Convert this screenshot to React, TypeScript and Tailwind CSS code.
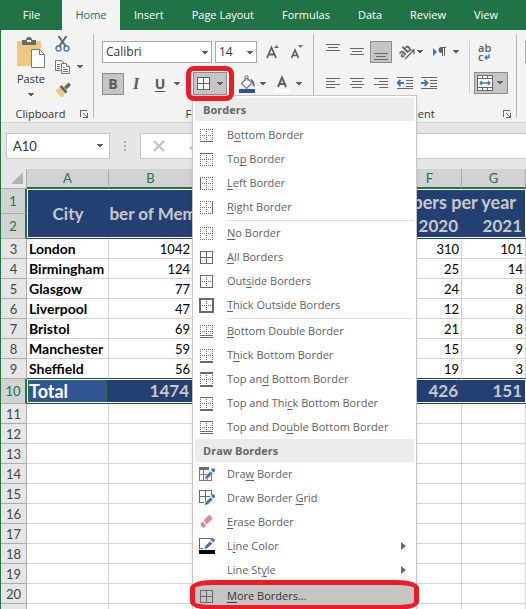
import React, { useState } from 'react';

type Edge = 'none' | 'dot' | 'solid' | 'thick' | 'double';

interface BorderIconProps {
    top?: Edge;
    bottom?: Edge;
    left?: Edge;
    right?: Edge;
    inner?: Edge;
}

interface MenuEntry {
    before: string;
    key: string;
    after: string;
    icon?: React.ReactNode;
    submenu?: boolean;
}

const Caret: React.FC<{ className?: string }> = ({ className = '' }) => (
    <svg className={`w-[10px] h-[4px] shrink-0 ${className}`} viewBox="0 0 10 4" shapeRendering="crispEdges">
        <path d="M2 0h6v1H7v1H6v1H4V2H3V1H2z" fill="#5f5f5f" />
    </svg>
);

const BorderIcon: React.FC<BorderIconProps> = ({ top = 'dot', bottom = 'dot', left = 'dot', right = 'dot', inner = 'dot' }) => {
    const width = (edge: Edge) => (edge === 'thick' ? 2 : 1);
    const dash = (edge: Edge) => (edge === 'dot' ? '1 1' : undefined);
    return (
        <svg width="15" height="15" viewBox="-1 -1 15 15" fill="none" stroke="#6a6a6a" shapeRendering="crispEdges">
            <path d="M0 6.5H13M6.5 0V13" strokeDasharray={dash(inner)} />
            <path d={top === 'thick' ? 'M0 0H13' : 'M0 .5H13'} strokeWidth={width(top)} strokeDasharray={dash(top)} />
            <path d={left === 'thick' ? 'M0 -1V14' : 'M.5 0V13'} strokeWidth={width(left)} strokeDasharray={dash(left)} />
            <path d={right === 'thick' ? 'M13 -1V14' : 'M12.5 0V13'} strokeWidth={width(right)} strokeDasharray={dash(right)} />
            <path d={bottom === 'thick' ? 'M0 13H13' : 'M0 12.5H13'} strokeWidth={width(bottom)} strokeDasharray={dash(bottom)} />
            {bottom === 'double' && <path d="M0 10.5H13" />}
        </svg>
    );
};

const Pencil = () => (
    <>
        <path d="M5.5 13.5l1-3.5 5-5 2.5 2.5-5 5z" fill="#3e76b5" stroke="#fff" strokeWidth=".6" />
        <path d="M12 4l1.5-1.5a1 1 0 0 1 1.5 0l1 1a1 1 0 0 1 0 1.500L14.500 6.500z" fill="#3e76b5" />
    </>
);

const DrawBorderIcon = () => (
    <svg width="16" height="16" viewBox="0 0 16 16">
        <path d="M0 1h10v3H0z" fill="#6a6a6a" />
        <path d="M.5 3v11.500h12V9M4.500 4v10M0 8.500h8M8.500 10v4" fill="none" stroke="#777" shapeRendering="crispEdges" />
        <Pencil />
    </svg>
);

const DrawGridIcon = () => (
    <svg width="16" height="16" viewBox="0 0 16 16">
        <path d="M5 12.500H.5V.5h12V5M6.500 1v11M1 6.500h10" fill="none" stroke="#6a6a6a" shapeRendering="crispEdges" />
        <g transform="translate(0 2)"><Pencil /></g>
    </svg>
);

const EraserIcon = () => (
    <svg width="16" height="16" viewBox="0 0 16 16">
        <path d="M4.500 6.500l5-5q1-.8 2 0l1.500 2.500q.4 1-.4 1.800l-4.800 4.400z" fill="#e48597" />
        <path d="M3.700 7.500l3.600 4-2.200 2-1.500.2-2-2.700.2-1.700z" fill="#e48597" />
    </svg>
);

const LineColorIcon = () => (
    <svg width="16" height="16" viewBox="0 0 16 16">
        <path d="M4 10.500H.5v-10h12" fill="none" stroke="#6a6a6a" shapeRendering="crispEdges" />
        <g transform="translate(-.5 -2)"><Pencil /></g>
        <path d="M0 12h16v4H0z" fill="#000" />
    </svg>
);

const HORIZONTAL: { [name: string]: string } = {
    top: 'M1 .5h14M3 3.500h10M1 6.500h14',
    middle: 'M1 4.500h14M3 7.500h10M1 10.500h14',
    bottom: 'M1 9.500h14M3 12.500h10M1 15.500h14',
    left: 'M1 3.500h14M1 6.500h9M1 9.500h14M1 12.500h9',
    center: 'M1 3.500h14M3 6.500h10M1 9.500h14M3 12.500h10',
    right: 'M1 3.500h14M6 6.500h9M1 9.500h14M6 12.500h9',
};

const LinesIcon: React.FC<{ kind: string }> = ({ kind }) => (
    <svg width="16" height="16" viewBox="0 0 16 16" fill="none" stroke="#666" shapeRendering="crispEdges">
        <path d={HORIZONTAL[kind]} />
    </svg>
);

const IndentIcon: React.FC<{ increase?: boolean }> = ({ increase }) => (
    <svg width="16" height="14" viewBox="0 0 16 14" fill="none">
        <path d="M0 1.500h16M9 4.500h7M9 7.500h7M9 10.500h7M0 12.500h16" stroke="#666" shapeRendering="crispEdges" />
        <path d={increase ? 'M0 7h6M3.500 4l3 3-3 3' : 'M7 7H1M3.500 4l-3 3 3 3'} stroke="#3e76b5" strokeWidth="1.900" />
    </svg>
);

const Launcher = () => (
    <svg width="8" height="8" viewBox="0 0 8 8" fill="none" stroke="#666" shapeRendering="crispEdges">
        <path d="M.5 7V.5H7M3 3l4 4M7.500 3v4.500H3" />
    </svg>
);

const iconButton = 'w-[22px] h-[22px] shrink-0 flex items-center justify-center';

const RibbonGroup: React.FC<{ label: string; className?: string; children: React.ReactNode }> = ({ label, className = '', children }) => (
    <section className="flex shrink-0">
        <div className={`flex flex-col ${className}`}>
            <div className="h-[76px] pt-1 shrink-0">{children}</div>
            <div className="flex items-center h-4 shrink-0">
                <span className="flex-1 text-center text-[#333]">{label}</span>
                <button aria-label={`${label} settings`} className="w-[13px]"><Launcher /></button>
            </div>
        </div>
        <div className="w-px my-1 bg-[#b4b4b4]" />
    </section>
);

const firstItems: MenuEntry[] = [
    { before: 'B', key: 'o', after: 'ttom Border', icon: <BorderIcon bottom="solid" /> },
    { before: 'To', key: 'p', after: ' Border', icon: <BorderIcon top="solid" /> },
    { before: '', key: 'L', after: 'eft Border', icon: <BorderIcon left="solid" /> },
    { before: '', key: 'R', after: 'ight Border', icon: <BorderIcon right="solid" /> },
];

const boxItems: MenuEntry[] = [
    { before: '', key: 'N', after: 'o Border', icon: <BorderIcon /> },
    { before: '', key: 'A', after: 'll Borders', icon: <BorderIcon top="solid" bottom="solid" left="solid" right="solid" inner="solid" /> },
    { before: 'Out', key: 's', after: 'ide Borders', icon: <BorderIcon top="solid" bottom="solid" left="solid" right="solid" /> },
    { before: '', key: 'T', after: 'hick Outside Borders', icon: <BorderIcon top="thick" bottom="thick" left="thick" right="thick" /> },
];

const bottomItems: MenuEntry[] = [
    { before: '', key: 'B', after: 'ottom Double Border', icon: <BorderIcon bottom="double" /> },
    { before: 'T', key: 'h', after: 'ick Bottom Border', icon: <BorderIcon bottom="thick" /> },
    { before: 'Top an', key: 'd', after: ' Bottom Border', icon: <BorderIcon top="thick" bottom="thick" /> },
    { before: 'Top and Thi', key: 'c', after: 'k Bottom Border', icon: <BorderIcon top="solid" bottom="thick" /> },
    { before: 'Top and Do', key: 'u', after: 'ble Bottom Border', icon: <BorderIcon top="solid" bottom="double" /> },
];

const drawItems: MenuEntry[] = [
    { before: 'Dra', key: 'w', after: ' Border', icon: <DrawBorderIcon /> },
    { before: 'Draw Border ', key: 'G', after: 'rid', icon: <DrawGridIcon /> },
    { before: '', key: 'E', after: 'rase Border', icon: <EraserIcon /> },
    { before: 'L', key: 'i', after: 'ne Color', icon: <LineColorIcon />, submenu: true },
    { before: 'Line St', key: 'y', after: 'le', submenu: true },
];

const MenuItem: React.FC<{ item: MenuEntry; active?: boolean }> = ({ item, active }) => (
    <button
        role="menuitem"
        className={`flex items-center w-full h-6 text-left ${active ? 'bg-[#c5c5c5] text-[#333]' : 'text-[#5f5f5f] hover:bg-[#e1e1e1]'}`}
    >
        <span className="w-8 pl-1 shrink-0">{item.icon}</span>
        <span className="flex-1 whitespace-nowrap">
            {item.before}
            <span className="underline underline-offset-2">{item.key}</span>
            {item.after}
        </span>
        {item.submenu && (
            <svg className="mr-2" width="5" height="8" viewBox="0 0 5 8"><path d="M0 0l5 4-5 4z" fill="#6a6a6a" /></svg>
        )}
    </button>
);

const MenuHeading: React.FC<{ children: string }> = ({ children }) => (
    <div className="flex items-center h-[23px] pl-2 bg-[#ebebeb] font-bold text-[#666]">{children}</div>
);

const Separator = () => <div className="h-px mt-px ml-8 bg-[#e1e1e1]" />;

const BordersMenu = () => (
    <div role="menu" className="absolute top-full -left-px z-20 w-[225px] p-[2px] bg-white border border-[#c6c6c6] shadow-md">
        <MenuHeading>Borders</MenuHeading>
        <div className="pt-[2px]">{firstItems.map(item => <MenuItem key={item.after} item={item} />)}</div>
        <Separator />
        {boxItems.map(item => <MenuItem key={item.after} item={item} />)}
        <Separator />
        {bottomItems.map(item => <MenuItem key={item.after} item={item} />)}
        <MenuHeading>Draw Borders</MenuHeading>
        {drawItems.map(item => <MenuItem key={item.after} item={item} />)}
        <Separator />
        <div className="relative">
            <MenuItem active item={{ before: '', key: 'M', after: 'ore Borders...', icon: <BorderIcon top="solid" bottom="solid" left="solid" right="solid" inner="solid" /> }} />
            <div className="absolute -inset-x-[5px] -top-1 -bottom-[2px] border-[5px] border-[#ed1c24] rounded-[22px/8px] pointer-events-none" />
        </div>
    </div>
);

const Ribbon = () => {
    const [menuOpen, setMenuOpen] = useState(true);

    return (
        <div className="flex h-[93px] bg-[#f3f3f3] border-b border-[#d2d2d2]">
            <RibbonGroup label="Clipboard" className="w-[92px]">
                <div className="flex pt-[3px] pl-3">
                    <button className="flex flex-col items-center w-9 text-[#333]">
                        <svg width="30" height="32" viewBox="0 0 30 32">
                            <path d="M1 4h24v25H1z" fill="#edc87e" />
                            <path d="M6 3h4q0-3 3-3t3 3h4v5H6z" fill="#6a6a6a" />
                            <path d="M11 3h4v2h-4z" fill="#fff" />
                            <path d="M15.500 12.500h8l5 5v13h-13z" fill="#fff" stroke="#777" />
                            <path d="M23.500 12.500v5h5" fill="none" stroke="#777" />
                        </svg>
                        <span className="text-[11px] leading-5">Paste</span>
                        <Caret className="mt-1" />
                    </button>
                    <div className="flex flex-col gap-[7px] pl-[6px] -mt-px">
                        <button aria-label="Cut">
                            <svg width="16" height="16" viewBox="0 0 16 16" fill="none">
                                <path d="M3.500 0l7 10M11.500 0l-7 10" stroke="#666" strokeWidth="2" />
                                <circle cx="3.500" cy="12.500" r="2.500" stroke="#3e76b5" strokeWidth="1.300" />
                                <circle cx="11.500" cy="12.500" r="2.500" stroke="#3e76b5" strokeWidth="1.300" />
                            </svg>
                        </button>
                        <button aria-label="Copy" className="flex items-center gap-1">
                            <svg width="16" height="16" viewBox="0 0 16 16" fill="#fff" stroke="#777">
                                <path d="M.5 1.500h6l3 3v7h-9z" />
                                <path d="M2 5.500h3M2 7.500h3M2 9.500h3" stroke="#3e76b5" />
                                <path d="M6.500 4.500h5l3 3v7h-8z" />
                                <path d="M11.500 4.500v3h3" />
                                <path d="M8 8.500h2M8 10.500h5M8 12.500h5" stroke="#3e76b5" />
                            </svg>
                            <Caret />
                        </button>
                        <button aria-label="Format Painter">
                            <svg width="16" height="16" viewBox="0 0 16 16">
                                <path d="M0 8l5-2 5 5-2 4H6z" fill="#edc87e" />
                                <path d="M4.500 5l2-2 6 6.500-2 2z" fill="#666" />
                                <path d="M9 5l4.500-4.500L16 3l-4.500 4.500z" fill="#666" />
                            </svg>
                        </button>
                    </div>
                </div>
            </RibbonGroup>

            <RibbonGroup label="Font" className="w-[219px]">
                <div className="flex flex-col gap-[9px] pt-[7px] pl-2">
                    <div className="flex items-center">
                        <div className="relative mr-[3px]">
                            <select aria-label="Font name" className="appearance-none w-[110px] h-[22px] pl-[3px] bg-white border border-[#ababab] text-xs text-[#333]">
                                <option>Calibri</option>
                            </select>
                            <Caret className="absolute right-[2px] top-[10px] pointer-events-none" />
                        </div>
                        <div className="relative mr-1">
                            <select aria-label="Font size" className="appearance-none w-[42px] h-[22px] pl-[3px] bg-white border border-[#ababab] text-xs text-[#333]">
                                <option>14</option>
                            </select>
                            <Caret className="absolute right-[2px] top-[10px] pointer-events-none" />
                        </div>
                        <button aria-label="Increase Font Size" className="w-6 flex justify-center">
                            <svg width="14" height="16" viewBox="0 0 14 16" fill="none">
                                <path d="M1 14L5.500 3.500 10 14M2.500 10.500h6" stroke="#5f5f5f" strokeWidth="1.800" />
                                <path d="M8 4l2.500-3L13 4z" fill="#3e76b5" />
                            </svg>
                        </button>
                        <button aria-label="Decrease Font Size" className="w-6 flex justify-center">
                            <svg width="14" height="16" viewBox="0 0 14 16" fill="none">
                                <path d="M1.500 14L5 6l3.500 8M2.500 11.500h5" stroke="#5f5f5f" strokeWidth="1.700" />
                                <path d="M8 1l2.500 3L13 1z" fill="#3e76b5" />
                            </svg>
                        </button>
                    </div>
                    <div className="flex items-center text-sm text-[#5a5a5a]">
                        <button className={`${iconButton} font-bold bg-[#c5c5c5] border border-[#8c8c8c]`}>B</button>
                        <button className="w-6 font-[Liberation_Serif,serif] italic font-bold text-base leading-5">I</button>
                        <button className="w-6 font-bold underline underline-offset-2">U</button>
                        <Caret className="mr-[11px]" />
                        <div className="relative">
                            <button
                                aria-label="Borders"
                                aria-expanded={menuOpen}
                                onClick={() => setMenuOpen(!menuOpen)}
                                className="flex items-center justify-between w-[34px] h-[23px] pl-[2px] pr-px bg-[#c5c5c5] border border-[#8c8c8c]"
                            >
                                <svg width="15" height="15" viewBox="0 0 15 15" shapeRendering="crispEdges">
                                    <path d="M1.500 1.500h12v12h-12zM7.500 1v13M1 7.500h13" fill="#fff" stroke="#5f5f5f" />
                                </svg>
                                <Caret />
                            </button>
                            <div className="absolute z-30 -inset-x-[7px] -top-[6px] -bottom-[6px] border-[5px] border-[#ed1c24] rounded-lg pointer-events-none" />
                            {menuOpen && <div className="text-[11px]"><BordersMenu /></div>}
                        </div>
                        <button aria-label="Fill Color" className="ml-3">
                            <svg width="16" height="18" viewBox="0 0 16 18">
                                <path d="M2.500 8.500L8 3l5 5-5.500 5.500z" fill="#fff" stroke="#777" strokeWidth="1.200" />
                                <path d="M6 6V2q0-1.500 1.500-1.500T9 2v4" fill="none" stroke="#777" />
                                <path d="M11 4q5 0 4.500 8l-2-1.500V8z" fill="#3e76b5" />
                                <path d="M0 14h16v4H0z" fill="#2f5496" />
                            </svg>
                        </button>
                        <Caret className="ml-[3px] mr-[6px]" />
                        <button aria-label="Font Color">
                            <svg width="16" height="18" viewBox="0 0 16 18" fill="none">
                                <path d="M4 12L8 2.500 12 12M5.500 9h5" stroke="#5f5f5f" strokeWidth="2" />
                                <path d="M0 14h16v4H0z" fill="#fff" />
                            </svg>
                        </button>
                        <Caret className="ml-1" />
                    </div>
                </div>
            </RibbonGroup>

            <RibbonGroup label="Alignment" className="w-[202px]">
                <div className="flex justify-between pt-[7px] pl-2 pr-2">
                    <div className="flex flex-col gap-[9px]">
                        <div className="flex items-center gap-[2px]">
                            <button aria-label="Top Align" className={iconButton}><LinesIcon kind="top" /></button>
                            <button aria-label="Middle Align" className={iconButton}><LinesIcon kind="middle" /></button>
                            <button aria-label="Bottom Align" className={`${iconButton} bg-[#c5c5c5] border border-[#8c8c8c]`}><LinesIcon kind="bottom" /></button>
                            <button aria-label="Orientation" className="flex items-center ml-1">
                                <svg width="17" height="20" viewBox="0 0 17 20" fill="none" overflow="visible">
                                    <text x="0" y="14" transform="rotate(-45 5 10)" fontSize="11" fontWeight="bold" fill="#5f5f5f">ab</text>
                                    <path d="M7 17L15.500 8.500M11.500 8h4.500v4.500" stroke="#5f5f5f" strokeWidth="1.200" />
                                </svg>
                                <Caret />
                            </button>
                            <button aria-label="Text Direction" className="flex items-center gap-1 ml-[6px]">
                                <svg width="14" height="12" viewBox="0 0 14 12">
                                    <path d="M0 2l4 4-4 4z" fill="#3e76b5" />
                                    <path d="M9 1q-3.500 0-3.500 3T9 7z" fill="#5f5f5f" />
                                    <path d="M8 1.500h5M9.500 1v9M11.500 1v9" stroke="#5f5f5f" fill="none" />
                                </svg>
                                <Caret />
                            </button>
                        </div>
                        <div className="flex items-center gap-[2px]">
                            <button aria-label="Align Left" className={iconButton}><LinesIcon kind="left" /></button>
                            <button aria-label="Center" className={iconButton}><LinesIcon kind="center" /></button>
                            <button aria-label="Align Right" className={iconButton}><LinesIcon kind="right" /></button>
                            <button aria-label="Decrease Indent" className={iconButton}><IndentIcon /></button>
                            <button aria-label="Increase Indent" className={iconButton}><IndentIcon increase /></button>
                        </div>
                    </div>
                    <div className="flex gap-1">
                        <div className="w-px bg-[#d0d0d0]" />
                        <div className="flex flex-col gap-[9px]">
                            <button aria-label="Wrap Text" className="w-[22px] h-[22px] pl-1 flex flex-col items-start justify-center font-semibold text-[11px] leading-[9px] text-[#5f5f5f]">
                                <span>ab</span>
                                <span className="flex items-end">
                                    c
                                    <svg width="7" height="7" viewBox="0 0 7 7" fill="none" stroke="#3e76b5" strokeWidth="1.300">
                                        <path d="M6 0v3.500H2M4 1.500l-2 2 2 2" />
                                    </svg>
                                </span>
                            </button>
                            <button aria-label="Merge and Center" className="flex items-center justify-between w-[34px] h-[22px] pl-[2px] pr-[2px] bg-[#c5c5c5] border border-[#8c8c8c]">
                                <svg width="16" height="16" viewBox="0 0 16 16">
                                    <path d="M.5.5h15v15H.5zM.5 3.500h15M.5 12.500h15M5.500.5v3M10.500.5v3M5.500 12.500v3M10.500 12.500v3" fill="#fff" stroke="#666" shapeRendering="crispEdges" />
                                    <path d="M3 8h10M5 6L3 8l2 2M11 6l2 2-2 2" fill="none" stroke="#3e76b5" strokeWidth="1.300" />
                                </svg>
                                <Caret />
                            </button>
                        </div>
                    </div>
                </div>
            </RibbonGroup>
            <div className="pt-[11px] pl-2 flex-1 min-w-0">
                <div className="h-[22px] bg-white border border-r-0 border-[#ababab]" />
            </div>
        </div>
    );
};

const TABS = ['Insert', 'Page Layout', 'Formulas', 'Data', 'Review', 'View'];

const members: [string, number, number, number][] = [
    ['London', 1042, 310, 101],
    ['Birmingham', 124, 25, 14],
    ['Glasgow', 77, 24, 8],
    ['Liverpool', 47, 12, 8],
    ['Bristol', 69, 21, 8],
    ['Manchester', 59, 15, 9],
    ['Sheffield', 56, 19, 3],
];

const EMPTY_ROWS = [11, 12, 13, 14, 15, 16, 17, 18, 19, 20, 21];

const cell = 'h-5 border-r border-b border-[#d4d4d4]';
const rowHead = 'border-r border-b border-[#ababab] bg-[#e6e6e6] font-normal text-[#444]';
const rowHeadOn = 'h-[25px] border-r-2 border-r-[#217346] border-b border-b-[#ababab] bg-[#d2d2d2] font-normal text-[#217346]';
const colHead = 'h-5 bg-[#d2d2d2] border-b-2 border-b-[#217346] border-r border-r-[#ababab] font-normal text-[#217346]';
const navy = 'bg-[#244072] text-[#c8c8c8] font-bold leading-5';
const navyBottom = 'border-b border-[#244072] shadow-[inset_0_-1px_0_#fff]';
const total = `${navy} text-[17px] border-b border-[#244072] shadow-[inset_0_1px_0_#fff,inset_0_-1px_0_#fff]`;

const Sheet = () => (
    <table className="w-full table-fixed border-separate border-spacing-0 bg-white font-[Lato,sans-serif] text-[13px] leading-4 text-black">
        <colgroup>
            <col className="w-[26px]" />
            <col className="w-[82px]" />
            <col className="w-[84px]" />
            <col />
            <col />
            <col />
            <col className="w-[64px]" />
            <col className="w-[64px]" />
        </colgroup>
        <thead>
            <tr>
                <td className="bg-[#e6e6e6] border-r border-b border-[#ababab] align-bottom">
                    <svg className="ml-[10px] mb-1" width="12" height="12" viewBox="0 0 12 12"><path d="M12 0v12H0z" fill="#b4b4b4" /></svg>
                </td>
                {['A', 'B', 'C', 'D', 'E', 'F', 'G'].map(letter => <th key={letter} scope="col" className={colHead}>{letter}</th>)}
            </tr>
        </thead>
        <tbody>
            <tr>
                <th scope="row" className={rowHeadOn}>1</th>
                <td rowSpan={2} className={`${navy} text-[17px] text-center border-b border-[#244072] shadow-[inset_1px_1px_0_#fff,inset_0_-1px_0_#fff]`}>City</td>
                <td rowSpan={2} className={`${navy} text-[17px] border-b border-[#244072] shadow-[inset_0_1px_0_#fff,inset_0_-1px_0_#fff]`}>
                    <div className="flex justify-center overflow-hidden whitespace-nowrap">Number of Members</div>
                </td>
                <td colSpan={5} className={`${navy} text-lg leading-5 pr-[10px] text-right shadow-[inset_-1px_1px_0_#fff]`}>Members per year</td>
            </tr>
            <tr>
                <th scope="row" className={rowHeadOn}>2</th>
                <td className={`${navy} ${navyBottom}`} />
                <td className={`${navy} ${navyBottom}`} />
                <td className={`${navy} ${navyBottom}`} />
                <td className={`${navy} ${navyBottom} text-[17px] pr-1 text-right`}>2020</td>
                <td className={`${navy} text-[17px] pr-1 text-right border-b border-[#244072] shadow-[inset_-1px_-1px_0_#fff]`}>2021</td>
            </tr>
            {members.map(([city, count, y2020, y2021], index) => {
                // the row above the total carries its dark top rule
                const edge = index === members.length - 1 ? 'border-b-[#244072]' : '';
                return (
                    <tr key={city}>
                        <th scope="row" className={rowHead}>{index + 3}</th>
                        <td className={`${cell} ${edge} pl-[2px] font-bold text-sm leading-4`}>{city}</td>
                        <td className={`${cell} ${edge} pr-[2px] text-right`}>{count}</td>
                        <td className={`${cell} ${edge}`} />
                        <td className={`${cell} ${edge}`} />
                        <td className={`${cell} ${edge}`} />
                        <td className={`${cell} ${edge} pr-[2px] text-right`}>{y2020}</td>
                        <td className={`${cell} ${edge} pr-[2px] text-right`}>{y2021}</td>
                    </tr>
                );
            })}
            <tr>
                <th scope="row" className={rowHeadOn}>10</th>
                <td className="h-[25px] bg-[#305496] text-white font-bold text-lg leading-5 pl-[2px] border-b border-[#244072] shadow-[inset_1px_1px_0_#fff,inset_0_-1px_0_#fff,inset_-2px_0_0_#244072,inset_2px_2px_0_#217346,inset_-3px_-2px_0_#217346]">Total</td>
                <td className={`${total} pr-1 text-right`}>1474</td>
                <td className={total} />
                <td className={total} />
                <td className={total} />
                <td className={`${total} pr-1 text-right`}>426</td>
                <td className={`${navy} text-[17px] pr-1 text-right border-b border-[#244072] shadow-[inset_-1px_1px_0_#fff,inset_0_-1px_0_#fff]`}>151</td>
            </tr>
            {EMPTY_ROWS.map(row => (
                <tr key={row}>
                    <th scope="row" className={rowHead}>{row}</th>
                    {['A', 'B', 'C', 'D', 'E', 'F', 'G'].map(letter => <td key={letter} className={cell} />)}
                </tr>
            ))}
        </tbody>
    </table>
);

const App: React.FC = () => (
    <div className="h-screen overflow-hidden border-l border-[#217346] bg-[#e6e6e6] font-['Open_Sans','Noto_Sans',sans-serif] text-[11px] leading-4">
        <nav className="flex h-[30px] bg-[#217346] text-white whitespace-nowrap">
            <button className="w-[61px] shrink-0">File</button>
            <button className="w-[58px] shrink-0 bg-[#f3f3f3] text-[#217346]">Home</button>
            {TABS.map(tab => <button key={tab} className="px-[14px]">{tab}</button>)}
        </nav>
        <Ribbon />
        <div className="flex items-center h-[46px] pl-[5px]">
            <div className="relative">
                <input aria-label="Name Box" defaultValue="A10" className="w-[104px] h-[26px] pl-[6px] bg-white border border-[#c6c6c6] font-[Lato,sans-serif] text-[13px] text-[#333]" />
                <Caret className="absolute right-[5px] top-[11px] pointer-events-none" />
            </div>
            <svg className="mx-[13px]" width="4" height="12" viewBox="0 0 4 12"><path d="M1 1h2v2H1zM1 5h2v2H1zM1 9h2v2H1z" fill="#ababab" /></svg>
            <div className="flex items-center gap-6 w-[92px] h-[26px] pl-3 bg-white border border-[#c6c6c6]">
                <button aria-label="Cancel">
                    <svg width="12" height="12" viewBox="0 0 12 12"><path d="M1 1l10 10M11 1L1 11" stroke="#c0c0c0" strokeWidth="2" /></svg>
                </button>
                <button aria-label="Enter">
                    <svg width="14" height="12" viewBox="0 0 14 12" fill="none"><path d="M1 7l4 4L13 1" stroke="#c0c0c0" strokeWidth="2" /></svg>
                </button>
            </div>
            <input aria-label="Formula Bar" className="flex-1 min-w-0 h-[26px] ml-1 bg-white border border-r-0 border-[#c6c6c6]" />
        </div>
        <Sheet />
    </div>
);

export default App;
